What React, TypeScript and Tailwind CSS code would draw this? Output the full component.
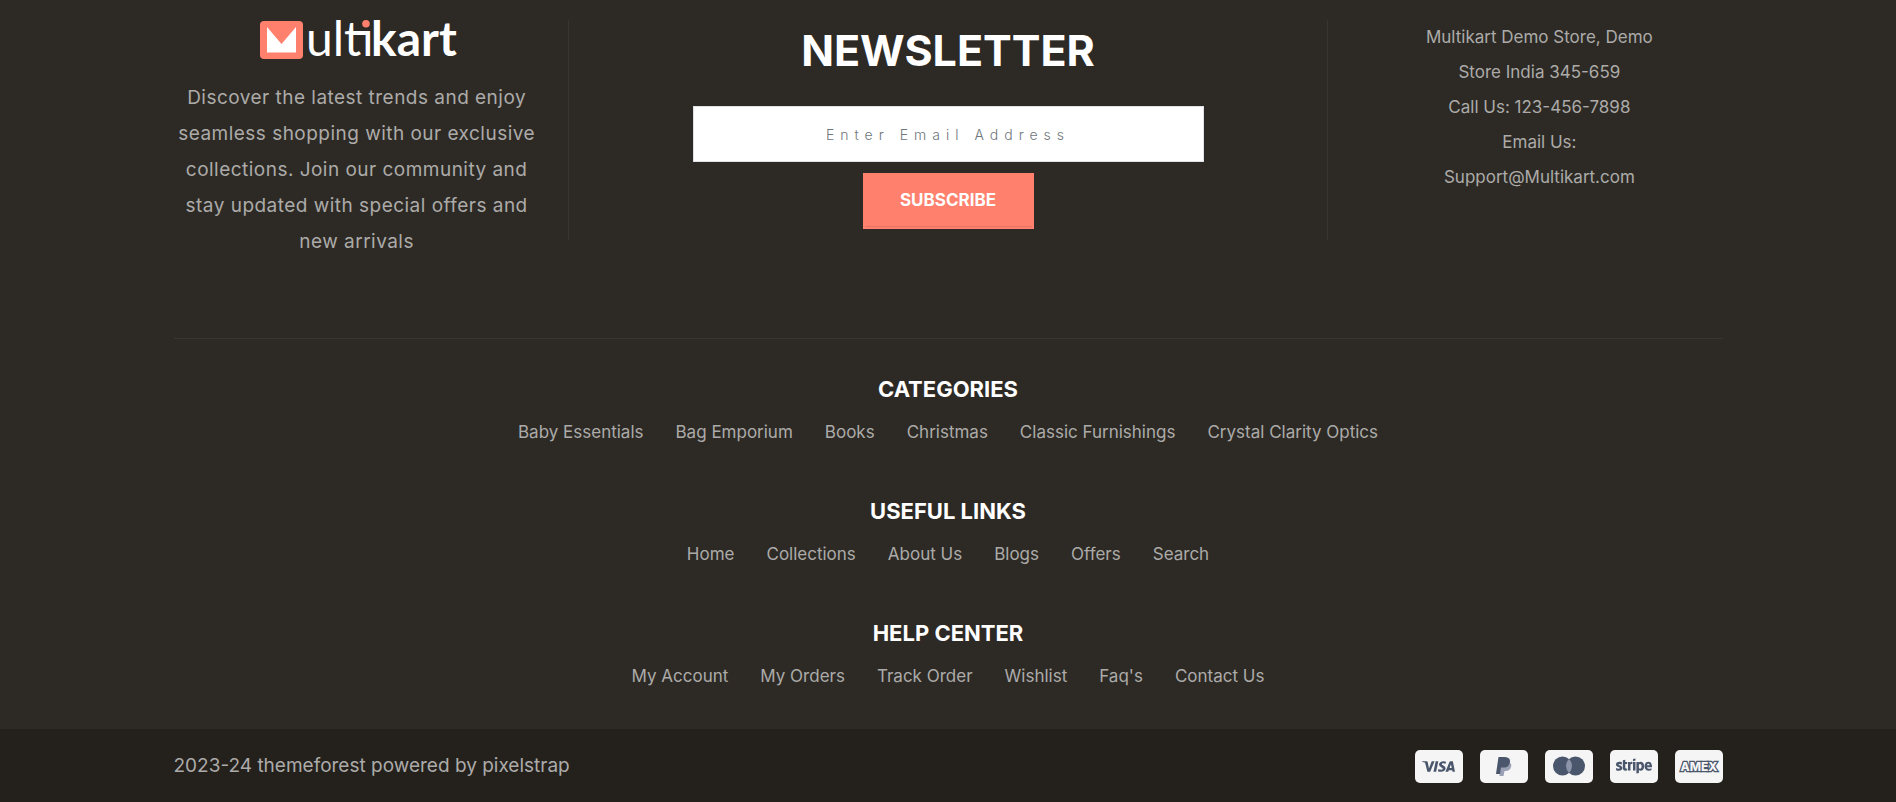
import React from "react";
import { SiVisa } from "react-icons/si";
import { FaStripe } from "react-icons/fa";

const groups = [
  { title: "CATEGORIES", links: ["Baby Essentials", "Bag Emporium", "Books", "Christmas", "Classic Furnishings", "Crystal Clarity Optics"] },
  { title: "USEFUL LINKS", links: ["Home", "Collections", "About Us", "Blogs", "Offers", "Search"] },
  { title: "HELP CENTER", links: ["My Account", "My Orders", "Track Order", "Wishlist", "Faq's", "Contact Us"] },
];

function Logo() {
  return (
    <svg width="200" height="64" viewBox="0 -12 200 64" role="img" aria-label="Multikart" className="font-['Lato',sans-serif]">
      <rect x="3" y="1" width="43" height="38" rx="4" fill="#ff806c" />
      <path d="M10 7 L24.500 24 L39 7 V32.500 H10 Z" fill="#fff" />
      <g fill="#fff" fontSize="48">
        <text x="49" y="35.500">ultı</text>
        <text x="114" y="35.500" fontWeight="700">kart</text>
      </g>
      <rect x="93" y="11.500" width="18" height="3.500" fill="#fff" />
      <circle cx="109" cy="3.700" r="3.800" fill="#ff806c" />
    </svg>
  );
}

function Card({ label, children }: { label: string; children: React.ReactNode }) {
  return (
    <li>
      <a href="#" aria-label={label} className="flex h-[33px] w-12 items-center justify-center rounded-[5px] bg-[#f5f5f5] text-[#4a566b]">
        {children}
      </a>
    </li>
  );
}

export default function App() {
  return (
    <footer className="bg-[#2d2a25] font-['Inter','Noto_Sans',sans-serif] text-[#acaba9]">
      <div className="mx-auto w-full max-w-[1549px]">
        <div className="grid grid-cols-4 gap-x-7 pt-5 text-center">
          <section className="flex flex-col items-center">
            <a href="#" aria-label="Multikart home" className="-mt-3"><Logo /></a>
            <p className="mt-2 px-1 text-[19px] leading-9 tracking-wide">
              Discover the latest trends and enjoy seamless shopping with our exclusive collections. Join our community and stay updated with special offers and new arrivals
            </p>
          </section>
          <section className="col-span-2 h-[220px] border-x border-[#383530]">
            <h2 className="pt-2 text-[43px] leading-[44px] font-bold text-white">NEWSLETTER</h2>
            <form className="mt-[34px] flex flex-col items-center gap-[11px]">
              <input
                type="email"
                aria-label="Email address"
                placeholder="Enter Email Address"
                className="h-14 w-[511px] max-w-full border border-[#dee2e6] bg-white px-3 text-center text-sm font-light tracking-[6px] text-[#212529] placeholder:text-[#70757a]"
              />
              <button type="button" className="h-14 w-[171px] bg-[#ff806c] p-0.5 text-[17px] font-bold text-white">
                <span className="flex h-full items-center justify-center border-b border-[#e67462]">SUBSCRIBE</span>
              </button>
            </form>
          </section>
          <address className="px-14 text-[17px] leading-[35px] not-italic">
            <p>Multikart Demo Store, Demo Store India 345-659</p>
            <p>Call Us: 123-456-7898</p>
            <p>Email Us: Support@Multikart.com</p>
          </address>
        </div>
        <div className="mt-[78px] border-t border-[#383530] py-9 text-center">
          <div className="flex flex-col gap-12">
            {groups.map((g) => (
              <nav key={g.title} aria-label={g.title}>
                <h3 className="text-[22px] leading-7 font-bold text-white">{g.title}</h3>
                <ul className="mt-3 flex justify-center gap-8 text-[17px] leading-[34px]">
                  {g.links.map((l) => (
                    <li key={l}><a href="#">{l}</a></li>
                  ))}
                </ul>
              </nav>
            ))}
          </div>
        </div>
      </div>
      <div className="bg-[#24211d]">
        <div className="mx-auto flex h-[74px] w-full max-w-[1549px] items-center justify-between">
          <p className="text-[19px]">2023-24 themeforest powered by pixelstrap</p>
          <ul className="flex gap-[17px]">
            <Card label="Visa"><SiVisa size={33} /></Card>
            <Card label="PayPal">
              <svg width="16" height="19" viewBox="0 0 16 19" aria-hidden="true">
                <path d="M5 6 H14 Q16 7 15 10 Q14 14 9.500 14 H8.500 L7.500 19 H3.500 Z" fill="#9aa1b5" />
                <path d="M2.500 0 H9 Q14.500 0.500 14 5 Q13 10.500 8 10.500 H5 L4 17 H0 Z" fill="#4a566b" />
              </svg>
            </Card>
            <Card label="Mastercard">
              <svg width="32" height="20" viewBox="0 0 32 20" aria-hidden="true">
                <circle cx="9.500" cy="10" r="9.500" fill="#4a566b" />
                <circle cx="22.500" cy="10" r="9.500" fill="#4a566b" />
                <path d="M16 3.100 A9.500 9.500 0 0 1 16 16.900 A9.500 9.500 0 0 1 16 3.100" fill="#8d95aa" />
              </svg>
            </Card>
            <Card label="Stripe"><FaStripe size={36} /></Card>
            <Card label="American Express">
              <svg width="42" height="18" viewBox="0 0 42 18" aria-hidden="true" className="font-['Inter',sans-serif]">
                <text x="21" y="13.500" textAnchor="middle" fontSize="12" fontWeight="800" fill="#f5f5f5" stroke="#4a566b" strokeWidth="2.600" paintOrder="stroke">AMEX</text>
              </svg>
            </Card>
          </ul>
        </div>
      </div>
    </footer>
  );
}
